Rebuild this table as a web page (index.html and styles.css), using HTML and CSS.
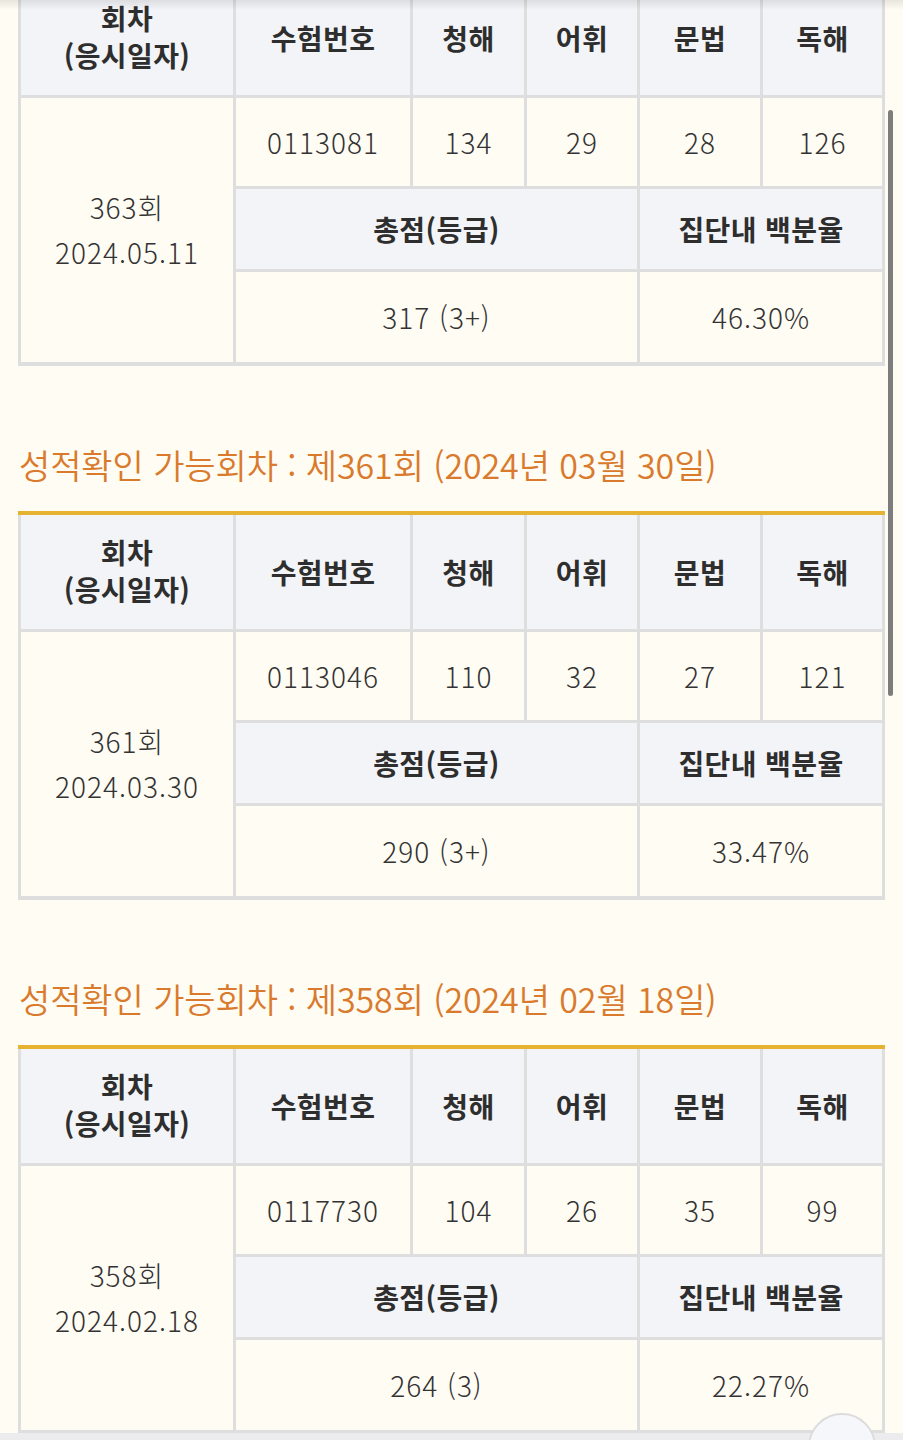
FILE: index.html
```html
<!DOCTYPE html>
<html lang="ko">
<head>
<meta charset="utf-8">
<title>성적확인</title>
<link rel="stylesheet" href="styles.css">
</head>
<body>
<div class="page">
  <section class="round first">
    <div class="score-grid">
      <div class="cell head round-col">회차<br>(응시일자)</div>
      <div class="cell head">수험번호</div>
      <div class="cell head">청해</div>
      <div class="cell head">어휘</div>
      <div class="cell head">문법</div>
      <div class="cell head">독해</div>
      <div class="cell date">363회<br>2024.05.11</div>
      <div class="cell">0113081</div>
      <div class="cell">134</div>
      <div class="cell">29</div>
      <div class="cell">28</div>
      <div class="cell">126</div>
      <div class="cell head sub span3">총점(등급)</div>
      <div class="cell head sub span2">집단내 백분율</div>
      <div class="cell val span3">317 (3+)</div>
      <div class="cell val span2">46.30%</div>
    </div>
  </section>

  <section class="round">
    <h2 class="round-title">성적확인 가능회차 : 제361회 (2024년 03월 30일)</h2>
    <div class="score-grid">
      <div class="cell head round-col">회차<br>(응시일자)</div>
      <div class="cell head">수험번호</div>
      <div class="cell head">청해</div>
      <div class="cell head">어휘</div>
      <div class="cell head">문법</div>
      <div class="cell head">독해</div>
      <div class="cell date">361회<br>2024.03.30</div>
      <div class="cell">0113046</div>
      <div class="cell">110</div>
      <div class="cell">32</div>
      <div class="cell">27</div>
      <div class="cell">121</div>
      <div class="cell head sub span3">총점(등급)</div>
      <div class="cell head sub span2">집단내 백분율</div>
      <div class="cell val span3">290 (3+)</div>
      <div class="cell val span2">33.47%</div>
    </div>
  </section>

  <section class="round">
    <h2 class="round-title">성적확인 가능회차 : 제358회 (2024년 02월 18일)</h2>
    <div class="score-grid">
      <div class="cell head round-col">회차<br>(응시일자)</div>
      <div class="cell head">수험번호</div>
      <div class="cell head">청해</div>
      <div class="cell head">어휘</div>
      <div class="cell head">문법</div>
      <div class="cell head">독해</div>
      <div class="cell date">358회<br>2024.02.18</div>
      <div class="cell">0117730</div>
      <div class="cell">104</div>
      <div class="cell">26</div>
      <div class="cell">35</div>
      <div class="cell">99</div>
      <div class="cell head sub span3">총점(등급)</div>
      <div class="cell head sub span2">집단내 백분율</div>
      <div class="cell val span3">264 (3)</div>
      <div class="cell val span2">22.27%</div>
    </div>
  </section>
</div>

<div class="top-shade"></div>
<div class="scrollbar"></div>
<div class="bottom-bar"></div>
<div class="top-button"></div>
</body>
</html>
```

FILE: styles.css
```css
html, body {
  margin: 0;
  padding: 0;
  background: #fffcf4;
}

body {
  font-family: "Noto Sans CJK KR", "Noto Sans", sans-serif;
  color: #333333;
  overflow: hidden;
  height: 1440px;
}

.page {
  padding: 0 18px 0 18px;
  width: 867px;
}

.round.first {
  margin-top: -23px;
}

.round-title {
  margin: 77px 0 24px 1px;
  font-size: 34px;
  line-height: 44px;
  height: 44px;
  font-weight: 350;
  color: #d97a2c;
  letter-spacing: -0.1px;
  white-space: nowrap;
}

.score-grid {
  display: grid;
  grid-template-columns: 212px 174px 111px 110px 120px 119px;
  grid-template-rows: 114px 88px 80px 90px;
  gap: 3px;
  background: #dedede;
  border-top: 4px solid #e6b232;
  padding: 0 3px 4px 3px;
}

.cell {
  background: #fffcf4;
  display: flex;
  align-items: center;
  justify-content: center;
  text-align: center;
  font-size: 28px;
  line-height: 36px;
  font-weight: 300;
  letter-spacing: 1px;
  color: #333333;
}

.cell.head {
  background: #f3f4f7;
  font-weight: 700;
  letter-spacing: 0.4px;
  color: #2e2e2e;
}

.cell.head.round-col {
  line-height: 37px;
  padding-bottom: 2px;
}

.cell.date {
  grid-row: span 3;
  line-height: 45px;
}

.span3 {
  grid-column: span 3;
}

.span2 {
  grid-column: span 2;
}

.top-shade {
  position: fixed;
  left: 0;
  top: 0;
  width: 903px;
  height: 10px;
  background: linear-gradient(to bottom, rgba(0, 0, 0, 0.09), rgba(0, 0, 0, 0));
}

.scrollbar {
  position: fixed;
  left: 888px;
  top: 110px;
  width: 5px;
  height: 586px;
  border-radius: 3px;
  background: #7d7d7d;
}

.bottom-bar {
  position: fixed;
  left: 0;
  bottom: 0;
  width: 903px;
  height: 7px;
  background: #ececee;
}

.top-button {
  position: fixed;
  left: 808px;
  top: 1413px;
  width: 68px;
  height: 68px;
  border-radius: 50%;
  background: #f6f7fa;
  border: 2px solid #dcdcdc;
  box-sizing: border-box;
}
```
